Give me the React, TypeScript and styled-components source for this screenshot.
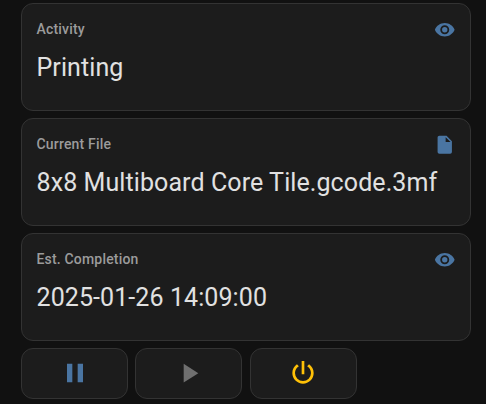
import React from 'react';
import styled, { createGlobalStyle } from 'styled-components';

const Global = createGlobalStyle`
  * { box-sizing: border-box; }
  body { margin: 0; background: #111111; font-family: Roboto, sans-serif; overflow: hidden; }
`;
const Page = styled.main`
  height: 404px;
  overflow: hidden;
  padding: 3px 15px 0 21px;
  display: flex;
  flex-direction: column;
  gap: 7px;
`;
const Card = styled.section`
  flex: none;
  height: 108px;
  background: #1c1c1c;
  border: 1px solid #333333;
  border-radius: 12px;
  padding: 13px 14.5px 0 14.5px;
`;
const Header = styled.header`
  display: flex;
  align-items: center;
  justify-content: space-between;
  height: 24px;
`;
const Label = styled.span`
  font-size: 14px;
  line-height: 24px;
  font-weight: 500;
  letter-spacing: 0.18px;
  color: #9b9b9b;
`;
const Value = styled.div`
  margin-top: 13px;
  font-size: 25px;
  line-height: 28px;
  letter-spacing: 0.09px;
  color: #e1e1e1;
  white-space: nowrap;
`;
const Icon = styled.svg<{ $size: number; $color: string }>`
  width: ${p => p.$size}px;
  height: ${p => p.$size}px;
  fill: ${p => p.$color};
  flex: none;
`;
const SensorIcon = styled.span`
  display: flex;
  padding-top: 1px;
`;
const Actions = styled.div`
  display: flex;
  gap: 7.3px;
`;
const ActionButton = styled.button`
  width: 107px;
  height: 51px;
  padding: 0 0 1px;
  display: flex;
  align-items: center;
  justify-content: center;
  background: #1c1c1c;
  border: 1px solid #333333;
  border-radius: 12px;
`;

const paths = {
  eye: 'M12,9A3,3 0 0,0 9,12A3,3 0 0,0 12,15A3,3 0 0,0 15,12A3,3 0 0,0 12,9M12,17A5,5 0 0,1 7,12A5,5 0 0,1 12,7A5,5 0 0,1 17,12A5,5 0 0,1 12,17M12,4.5C7,4.5 2.73,7.61 1,12C2.73,16.39 7,19.5 12,19.5C17,19.5 21.27,16.39 23,12C21.27,7.61 17,4.5 12,4.5Z',
  file: 'M13,9V3.5L18.5,9M6,2C4.89,2 4,2.89 4,4V20A2,2 0 0,0 6,22H18A2,2 0 0,0 20,20V8L14,2H6Z',
  pause: 'M14,19H18V5H14M6,19H10V5H6V19Z',
  play: 'M8,5.14V19.14L19,12.14L8,5.14Z',
  power: 'M16.56,5.44L15.11,6.89C16.84,7.94 18,9.83 18,12A6,6 0 0,1 12,18A6,6 0 0,1 6,12C6,9.83 7.16,7.94 8.88,6.88L7.44,5.44C5.36,6.88 4,9.28 4,12A8,8 0 0,0 12,20A8,8 0 0,0 20,12C20,9.28 18.64,6.88 16.56,5.44M13,3H11V13H13',
};

const Glyph = ({ name, size, color }: { name: keyof typeof paths; size: number; color: string }) => (
  <Icon viewBox="0 0 24 24" $size={size} $color={color}><path d={paths[name]} /></Icon>
);

const sensors: { label: string; value: string; icon: keyof typeof paths }[] = [
  { label: 'Activity', value: 'Printing', icon: 'eye' },
  { label: 'Current File', value: '8x8 Multiboard Core Tile.gcode.3mf', icon: 'file' },
  { label: 'Est. Completion', value: '2025-01-26 14:09:00', icon: 'eye' },
];

export default function App() {
  return (
    <Page>
      <Global />
      {sensors.map(s => (
        <Card key={s.label}>
          <Header>
            <Label>{s.label}</Label>
            <SensorIcon><Glyph name={s.icon} size={21.5} color="#4a75a2" /></SensorIcon>
          </Header>
          <Value>{s.value}</Value>
        </Card>
      ))}
      <Actions>
        <ActionButton aria-label="Pause"><Glyph name="pause" size={32} color="#4a75a2" /></ActionButton>
        <ActionButton aria-label="Resume"><Glyph name="play" size={32} color="#6f6f6f" /></ActionButton>
        <ActionButton aria-label="Power"><Glyph name="power" size={32} color="#ffc107" /></ActionButton>
      </Actions>
    </Page>
  );
}
